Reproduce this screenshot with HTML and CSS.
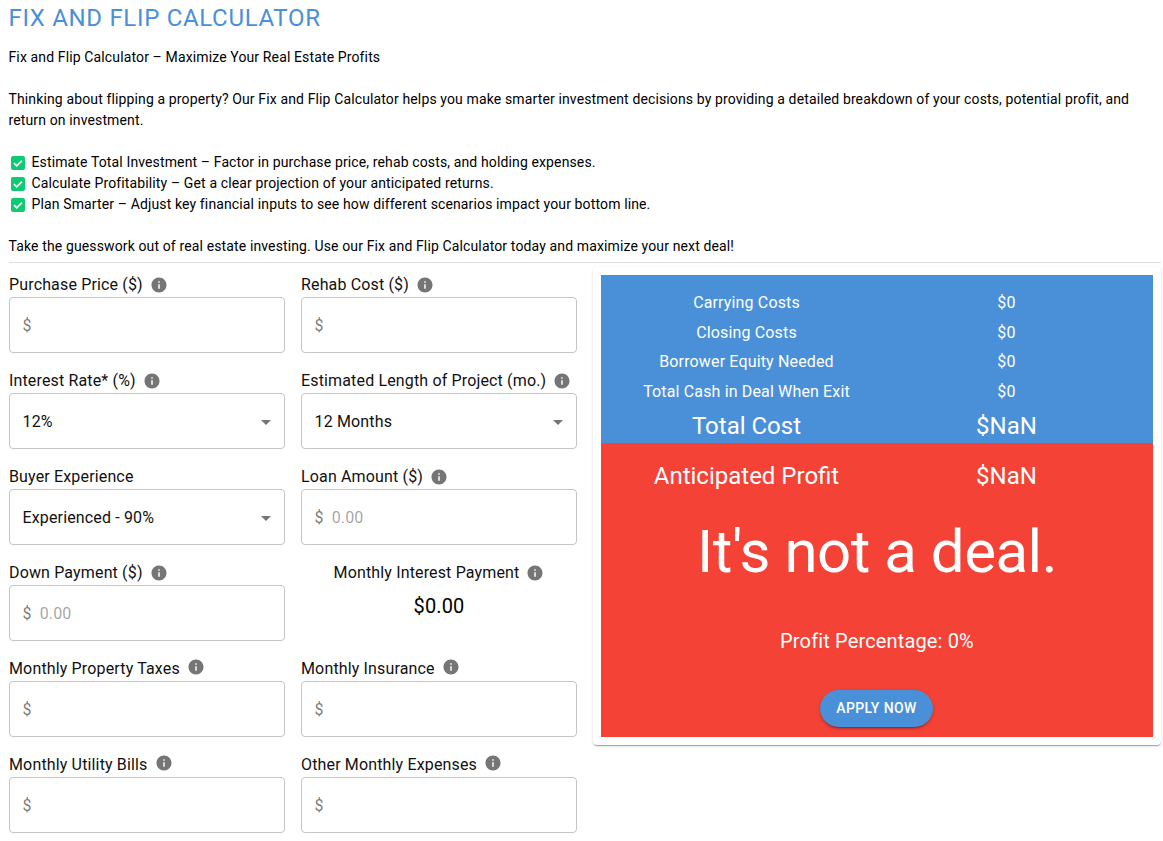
FILE: index.html
```html
<!DOCTYPE html>
<html lang="en">
<head>
<meta charset="utf-8">
<title>Fix and Flip Calculator</title>
<link rel="stylesheet" href="styles.css">
</head>
<body>
<svg class="defs" width="0" height="0" aria-hidden="true">
  <symbol id="info" viewBox="0 0 24 24"><path d="M12 2C6.48 2 2 6.48 2 12s4.48 10 10 10 10-4.48 10-10S17.52 2 12 2zm1 15h-2v-6h2v6zm0-8h-2V7h2v2z"/></symbol>
  <symbol id="check" viewBox="0 0 16 16"><rect x="1" y="1" width="14" height="14" rx="2" fill="#0ecb72"/><path d="M4 8.2l2.7 2.6L12 5.6" fill="none" stroke="#fff" stroke-width="1.7"/></symbol>
</svg>
<main class="page">
  <h1 class="title">FIX AND FLIP CALCULATOR</h1>
  <section class="intro">
    <p>Fix and Flip Calculator – Maximize Your Real Estate Profits</p>
    <p>Thinking about flipping a property? Our Fix and Flip Calculator helps you make smarter investment decisions by providing a detailed breakdown of your costs, potential profit, and return on investment.</p>
    <ul class="checks">
      <li><svg class="check"><use href="#check"/></svg>Estimate Total Investment – Factor in purchase price, rehab costs, and holding expenses.</li>
      <li><svg class="check"><use href="#check"/></svg>Calculate Profitability – Get a clear projection of your anticipated returns.</li>
      <li><svg class="check"><use href="#check"/></svg>Plan Smarter – Adjust key financial inputs to see how different scenarios impact your bottom line.</li>
    </ul>
    <p>Take the guesswork out of real estate investing. Use our Fix and Flip Calculator today and maximize your next deal!</p>
  </section>
  <hr class="rule">
  <div class="calc">
    <form class="fields">
      <div class="field">
        <div class="label">Purchase Price ($)<svg class="info"><use href="#info"/></svg></div>
        <div class="box"><span class="adorn">$</span></div>
      </div>
      <div class="field">
        <div class="label">Rehab Cost ($)<svg class="info"><use href="#info"/></svg></div>
        <div class="box"><span class="adorn">$</span></div>
      </div>
      <div class="field">
        <div class="label">Interest Rate* (%)<svg class="info"><use href="#info"/></svg></div>
        <div class="box select">12%<span class="caret"></span></div>
      </div>
      <div class="field">
        <div class="label">Estimated Length of Project (mo.)<svg class="info"><use href="#info"/></svg></div>
        <div class="box select">12 Months<span class="caret"></span></div>
      </div>
      <div class="field">
        <div class="label">Buyer Experience</div>
        <div class="box select">Experienced - 90%<span class="caret"></span></div>
      </div>
      <div class="field">
        <div class="label">Loan Amount ($)<svg class="info"><use href="#info"/></svg></div>
        <div class="box"><span class="adorn">$</span><span class="placeholder">0.00</span></div>
      </div>
      <div class="field">
        <div class="label">Down Payment ($)<svg class="info"><use href="#info"/></svg></div>
        <div class="box"><span class="adorn">$</span><span class="placeholder">0.00</span></div>
      </div>
      <div class="field readout">
        <div class="label">Monthly Interest Payment<svg class="info"><use href="#info"/></svg></div>
        <div class="amount">$0.00</div>
      </div>
      <div class="field">
        <div class="label">Monthly Property Taxes<svg class="info raised"><use href="#info"/></svg></div>
        <div class="box"><span class="adorn">$</span></div>
      </div>
      <div class="field">
        <div class="label">Monthly Insurance<svg class="info raised"><use href="#info"/></svg></div>
        <div class="box"><span class="adorn">$</span></div>
      </div>
      <div class="field">
        <div class="label">Monthly Utility Bills<svg class="info raised"><use href="#info"/></svg></div>
        <div class="box"><span class="adorn">$</span></div>
      </div>
      <div class="field">
        <div class="label">Other Monthly Expenses<svg class="info raised"><use href="#info"/></svg></div>
        <div class="box"><span class="adorn">$</span></div>
      </div>
    </form>
    <aside class="card">
      <div class="costs">
        <div class="row"><span>Carrying Costs</span><span>$0</span></div>
        <div class="row"><span>Closing Costs</span><span>$0</span></div>
        <div class="row"><span>Borrower Equity Needed</span><span>$0</span></div>
        <div class="row"><span>Total Cash in Deal When Exit</span><span>$0</span></div>
        <div class="row total"><span>Total Cost</span><span>$NaN</span></div>
      </div>
      <div class="result">
        <div class="row total profit"><span>Anticipated Profit</span><span>$NaN</span></div>
        <div class="verdict">It's not a deal.</div>
        <div class="percent">Profit Percentage: 0%</div>
        <button class="apply" type="button">APPLY NOW</button>
      </div>
    </aside>
  </div>
</main>
</body>
</html>
```
FILE: styles.css
```css
* { box-sizing: border-box; }
html, body { margin: 0; padding: 0; background: #fff; }
body {
  font-family: Roboto, "Liberation Sans", sans-serif;
  color: #111;
  overflow: hidden;
  height: 841px;
}
.defs { position: absolute; }
.page { padding: 0 2px 0 8.5px; }
.title {
  margin: 0;
  padding-top: 4px;
  height: 36px;
  font-size: 24px;
  line-height: 28px;
  font-weight: 400;
  letter-spacing: 0.68px;
  color: #4a90d9;
}
.intro {
  margin-top: 11px;
  font-size: 14px;
  line-height: 21px;
  letter-spacing: 0.13px;
  color: #000;
}
.intro p { margin: 0 0 21px; }
.intro p:last-child { margin: 0; }
.checks { list-style: none; margin: 0 0 21px; padding: 0; }
.checks li { display: flex; align-items: center; height: 21px; }
.check { width: 16px; height: 16px; margin: 0 5.5px 0 1.5px; flex: none; }
.rule { margin: 5px 0 0; border: 0; border-top: 1px solid #e0e0e0; }
.calc { display: flex; gap: 16px; align-items: flex-start; margin-left: 0.5px; }
.fields {
  width: 568px;
  flex: none;
  display: grid;
  grid-template-columns: 276px 276px;
  column-gap: 16px;
  padding-top: 9px;
}
.field { height: 96px; }
.label {
  display: flex;
  align-items: center;
  height: 25px;
  font-size: 16px;
  letter-spacing: 0.15px;
  white-space: nowrap;
}
.info { width: 18px; height: 18px; margin: 1px 0 0 7px; fill: #757575; flex: none; }
.info.raised { margin-top: -3px; }
.box {
  display: flex;
  align-items: center;
  height: 56px;
  padding: 0 14px 0 12.5px;
  border: 1px solid #c4c4c4;
  border-radius: 4px;
  font-size: 16px;
  letter-spacing: 0.15px;
}
.adorn { color: rgba(0, 0, 0, 0.54); margin-right: 8px; }
.placeholder { color: rgba(0, 0, 0, 0.38); }
.select { position: relative; }
.caret {
  position: absolute;
  right: 13px;
  top: 26px;
  border-left: 5px solid transparent;
  border-right: 5px solid transparent;
  border-top: 5px solid #757575;
}
.readout { text-align: center; }
.readout .label { justify-content: center; }
.amount { margin-top: 7px; font-size: 20px; line-height: 28px; letter-spacing: 0.15px; color: #000; }
.card {
  width: 568px;
  flex: none;
  margin-top: 4px;
  padding: 8px;
  border-radius: 4px;
  background: #fff;
  box-shadow: 0 2px 1px -1px rgba(0,0,0,.2), 0 1px 1px 0 rgba(0,0,0,.14), 0 1px 3px 0 rgba(0,0,0,.12);
}
.costs { background: #4a90d9; color: #fff; height: 168px; padding-top: 13px; }
.result { background: #f44336; color: #fff; height: 294px; text-align: center; }
.row {
  display: grid;
  grid-template-columns: 291px 229px;
  justify-items: center;
  font-size: 16px;
  line-height: 29.6px;
  letter-spacing: 0.15px;
}
.total { font-size: 24px; line-height: 38px; letter-spacing: 0; }
.costs .total { line-height: 36px; margin-top: 2px; }
.profit { padding-top: 14px; line-height: 38px; }
.verdict { margin-top: 22px; font-size: 60px; line-height: 70px; letter-spacing: -0.5px; }
.percent { margin-top: 40px; font-size: 20px; line-height: 28px; letter-spacing: 0.15px; }
.apply {
  display: block;
  margin: 35px 0 0 219px;
  width: 113px;
  height: 37px;
  padding: 0;
  border: 0;
  border-radius: 19px;
  background: #4a90d9;
  color: #fff;
  font: 500 14px/37px Roboto, "Liberation Sans", sans-serif;
  letter-spacing: 0.4px;
  box-shadow: 0 3px 1px -2px rgba(0,0,0,.2), 0 2px 2px 0 rgba(0,0,0,.14), 0 1px 5px 0 rgba(0,0,0,.12);
}
```
